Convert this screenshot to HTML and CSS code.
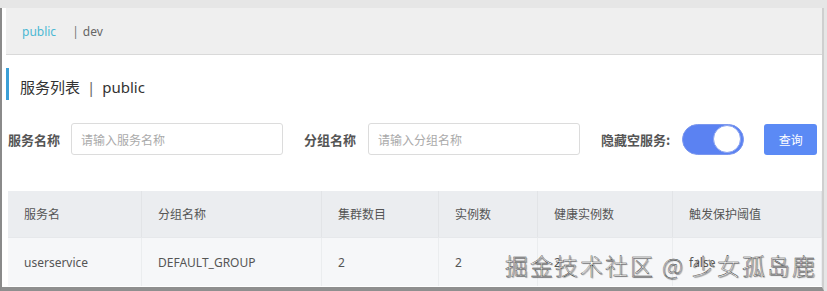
FILE: index.html
```html
<!DOCTYPE html>
<html lang="zh-CN">
<head>
    <meta charset="UTF-8">
    <meta name="viewport" content="width=device-width, initial-scale=1.0">
    <title>服务列表</title>
    <link rel="stylesheet" href="styles.css">
</head>
<body>

    <div class="frame">
        <div class="ns-bar">
            <span class="ns active">public</span>
            <span class="ns-sep">|</span>
            <span class="ns">dev</span>
        </div>

        <div class="page">
            <h2 class="title">服务列表 <span class="title-sep">|</span> public</h2>

            <div class="filters">
                <label class="field-label">服务名称</label>
                <input class="field" type="text" placeholder="请输入服务名称">
                <label class="field-label group-label">分组名称</label>
                <input class="field" type="text" placeholder="请输入分组名称">
                <label class="field-label hide-label">隐藏空服务:</label>
                <span class="switch"><span class="knob"></span></span>
                <button class="query">查询</button>
            </div>

            <table class="services">
                <thead>
                    <tr>
                        <th class="c-name">服务名</th>
                        <th class="c-group">分组名称</th>
                        <th class="c-cluster">集群数目</th>
                        <th class="c-inst">实例数</th>
                        <th class="c-health">健康实例数</th>
                        <th class="c-protect">触发保护阈值</th>
                    </tr>
                </thead>
                <tbody>
                    <tr>
                        <td>userservice</td>
                        <td>DEFAULT_GROUP</td>
                        <td>2</td>
                        <td>2</td>
                        <td>2</td>
                        <td>false</td>
                    </tr>
                </tbody>
            </table>
        </div>
    </div>

    <div class="watermark">掘金技术社区 @ 少女孤岛鹿</div>

</body>
</html>
```

FILE: styles.css
```css
body {
    margin: 0;
    width: 827px;
    height: 291px;
    overflow: hidden;
    background-color: #e6e6e6;
    font-family: "Noto Sans", "Noto Sans CJK SC", sans-serif;
    position: relative;
}
.frame {
    margin-top: 8px;
    width: 820px;
    height: 279px;
    background: white;
    border-left: 2px solid #8a8a8a;
    border-right: 2px solid #cfcfcf;
    border-bottom: 4px solid #8f8f8f;
    overflow: hidden;
}
.ns-bar {
    margin-left: 4px;
    height: 46px;
    background-color: #efefef;
    border-bottom: 1px solid #d9d9d9;
    display: flex;
    align-items: center;
    padding-left: 16px;
    font-size: 12px;
    color: #666;
}
.ns.active {
    color: #4bb8d3;
}
.ns-sep {
    margin-left: 16px;
    margin-right: 4px;
    color: #777;
}
.page {
    padding: 0 4px 0 4px;
}
.title {
    margin: 13px 0 0 0;
    height: 32px;
    box-sizing: border-box;
    border-left: 3px solid #3b9fd6;
    padding: 5px 0 0 11px;
    display: flex;
    align-items: center;
    font-size: 15px;
    font-weight: normal;
    color: #333;
    gap: 7px;
}
.title-sep {
    color: #666;
}
.filters {
    margin-top: 23px;
    height: 32px;
    display: flex;
    align-items: center;
    padding-left: 2px;
}
.field-label {
    font-family: "Noto Sans CJK SC", sans-serif;
    font-size: 13px;
    font-weight: bold;
    color: #555;
    margin-right: 11px;
    white-space: nowrap;
}
.group-label {
    margin-left: 21px;
    margin-right: 12px;
}
.hide-label {
    margin-left: 21px;
    margin-right: 12px;
}
.field {
    box-sizing: border-box;
    width: 212px;
    height: 32px;
    border: 1px solid #dcdcdc;
    border-radius: 3px;
    padding: 0 9px;
    font-family: "Noto Sans CJK SC", sans-serif;
    font-size: 12px;
    outline: none;
}
.field::placeholder {
    color: #aaa;
}
.switch {
    width: 62px;
    height: 31px;
    flex-shrink: 0;
    border-radius: 16px;
    background-color: #5b82f2;
    border: 1px solid #7b97ee;
    box-sizing: border-box;
    display: flex;
    align-items: center;
    justify-content: flex-end;
    padding-right: 2px;
}
.knob {
    width: 26px;
    height: 26px;
    border-radius: 50%;
    background: white;
    border: 1px solid #8aa3f0;
}
.query {
    margin-left: 20px;
    width: 53px;
    height: 31px;
    flex-shrink: 0;
    border: none;
    border-radius: 3px;
    background-color: #5b8af5;
    color: white;
    font-family: "Noto Sans CJK SC", sans-serif;
    font-size: 12px;
    cursor: pointer;
}
.services {
    margin-top: 36px;
    margin-left: 2px;
    width: 814px;
    border-collapse: collapse;
    font-size: 12px;
    color: #555;
    table-layout: fixed;
}
.services th {
    height: 46px;
    background-color: #ebedf0;
    font-weight: normal;
    text-align: left;
    padding: 0 0 0 16px;
    border-right: 1px solid #e2e4e7;
    border-bottom: 1px solid #e6e8eb;
}
.services td {
    height: 48px;
    background-color: #f6f7f9;
    padding: 0 0 0 16px;
    border-right: 1px solid #ebedef;
}
.c-name { width: 117px; }
.c-group { width: 163px; }
.c-cluster { width: 100px; }
.c-inst { width: 82px; }
.c-health { width: 118px; }
/* watermark lies over the table row */
.watermark {
    position: absolute;
    left: 505px;
    top: 248px;
    font-family: "Noto Sans CJK SC", sans-serif;
    font-size: 23px;
    font-weight: 300;
    color: white;
    letter-spacing: 2px;
    -webkit-text-stroke: 0.4px #333;
    text-shadow: 1px 1px 1px rgba(0, 0, 0, 0.4);
}
```
